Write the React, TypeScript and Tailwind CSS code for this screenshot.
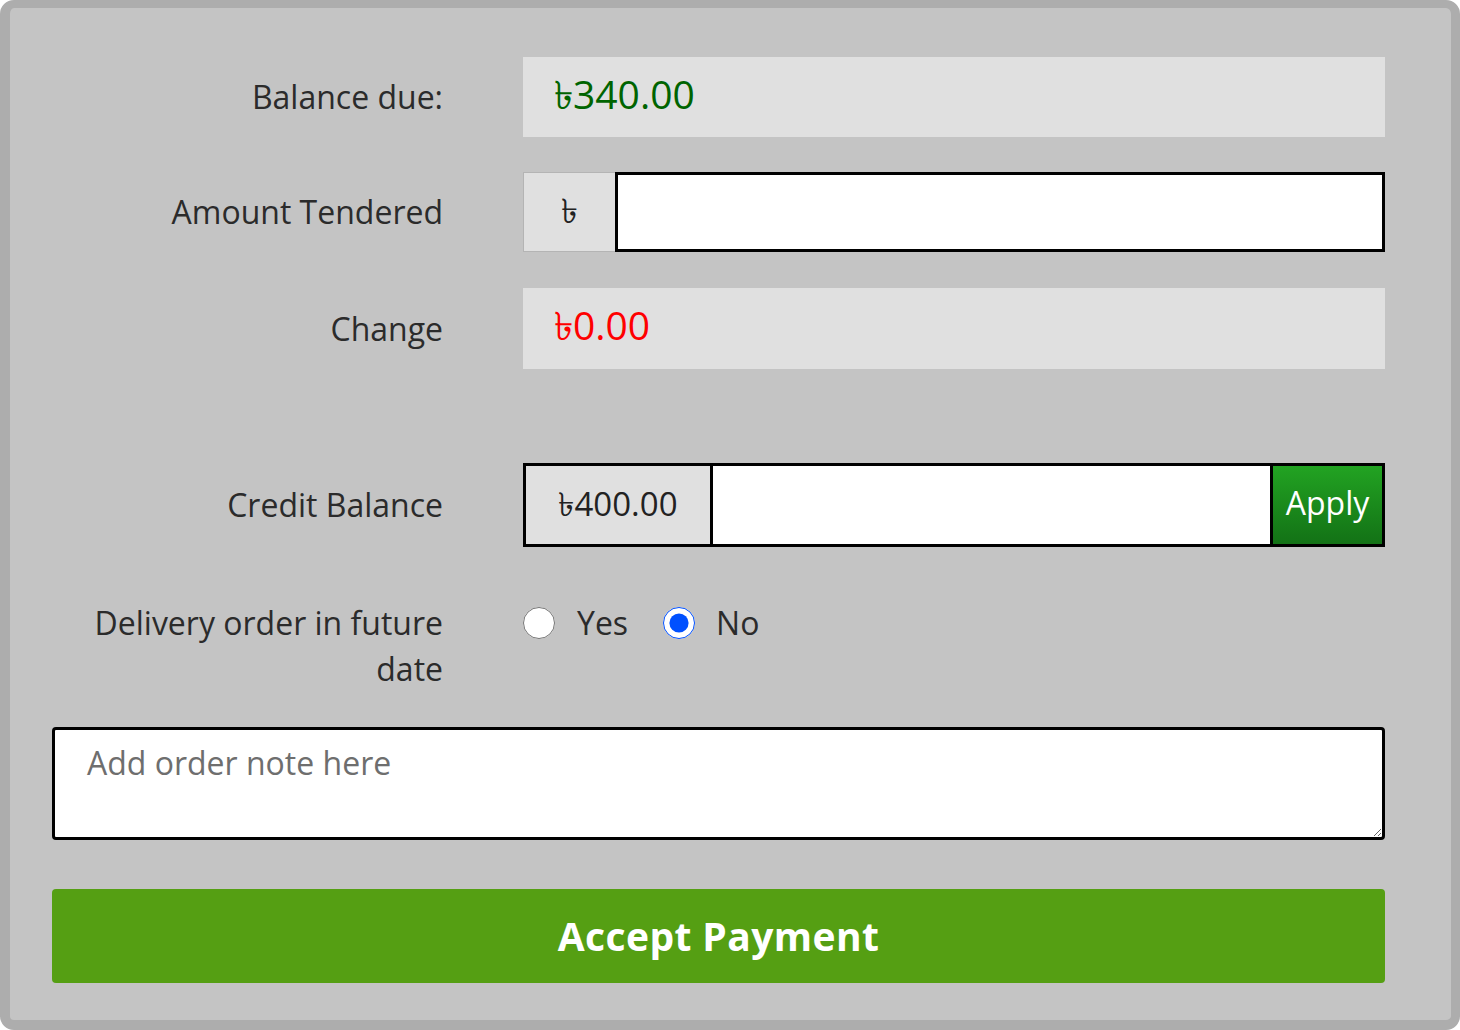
import { useState } from "react";

const font = { fontFamily: '"Open Sans", "Noto Sans", "DejaVu Sans", sans-serif' };

const Label = ({ children }: { children: React.ReactNode }) => (
  <div className="w-[433px] shrink-0 text-right text-[32px] leading-[46px] text-[#2b2b2b]">
    {children}
  </div>
);

export default function App() {
  const [delivery, setDelivery] = useState("no");

  return (
    <div
      style={font}
      className="w-[1460px] h-[1030px] bg-[#c4c4c4] border-t-[8px] border-l-[10px] border-r-[9px] border-b-[10px] border-[#adadad] rounded-[14px]"
    >
      <div className="flex flex-col pt-[49px]">
        {/* balance due */}
        <div className="flex items-center gap-[80px]">
          <Label>Balance due:</Label>
          <div className="w-[862px] h-[80px] bg-[#e0e0e0] flex items-center pl-[31px] pb-[5px] text-[39px] text-[#006400]">
            ৳340.00
          </div>
        </div>

        {/* amount tendered */}
        <div className="flex items-center gap-[80px] mt-[35px]">
          <Label>Amount Tendered</Label>
          <div className="w-[862px] h-[80px] flex">
            <div className="w-[92px] h-full bg-[#e0e0e0] border border-[#b4b4b4] border-r-0 flex items-center justify-center pb-[3px] text-[34px] text-[#222]">
              ৳
            </div>
            <input
              type="text"
              className="flex-1 h-full bg-white border-[3px] border-black outline-none px-3 text-[30px]"
            />
          </div>
        </div>

        {/* change */}
        <div className="flex items-center gap-[80px] mt-[36px]">
          <Label>Change</Label>
          <div className="w-[862px] h-[81px] bg-[#e0e0e0] flex items-center pl-[31px] pb-[7px] text-[39px] text-[#ff0000]">
            ৳0.00
          </div>
        </div>

        {/* credit balance */}
        <div className="flex items-center gap-[80px] mt-[94px]">
          <Label>Credit Balance</Label>
          <div className="w-[862px] h-[84px] flex border-[3px] border-black">
            <div className="w-[187px] h-full bg-[#e0e0e0] border-r-[3px] border-black flex items-center justify-center pb-[2px] text-[33px] text-[#222]">
              ৳400.00
            </div>
            <input
              type="text"
              className="flex-1 h-full bg-white outline-none px-3 text-[30px] border-r-[3px] border-black"
            />
            <button className="w-[109px] h-full bg-gradient-to-b from-[#22a322] to-[#137216] text-white text-[32px] flex items-center justify-center pb-[4px]">
              Apply
            </button>
          </div>
        </div>

        {/* delivery */}
        <div className="flex items-start gap-[80px] mt-[53px]">
          <Label>
            Delivery order in future
            <br />
            date
          </Label>
          <div className="flex items-center h-[46px] text-[32px] text-[#2b2b2b]">
            <label className="flex items-center cursor-pointer">
              <input
                type="radio"
                name="delivery"
                checked={delivery === "yes"}
                onChange={() => setDelivery("yes")}
                className="w-[32px] h-[32px] m-0 accent-[#0050ff]"
              />
              <span className="ml-[22px]">Yes</span>
            </label>
            <label className="flex items-center cursor-pointer ml-[35px]">
              <input
                type="radio"
                name="delivery"
                checked={delivery === "no"}
                onChange={() => setDelivery("no")}
                className="w-[32px] h-[32px] m-0 accent-[#0050ff]"
              />
              <span className="ml-[21px]">No</span>
            </label>
          </div>
        </div>

        {/* note */}
        <div className="pl-[42px] mt-[35px]">
          <textarea
            placeholder="Add order note here"
            className="block w-[1333px] h-[113px] bg-white border-[3px] border-black rounded-[4px] px-[32px] py-[10px] text-[32px] leading-[46px] text-[#333] placeholder:text-[#6e6e6e] outline-none resize-y"
          />
        </div>

        {/* accept */}
        <div className="pl-[42px] mt-[49px]">
          <button className="w-[1333px] h-[94px] bg-[#559f13] rounded-[4px] text-white font-bold text-[39px] tracking-[0.4px]">
            Accept Payment
          </button>
        </div>
      </div>
    </div>
  );
}
